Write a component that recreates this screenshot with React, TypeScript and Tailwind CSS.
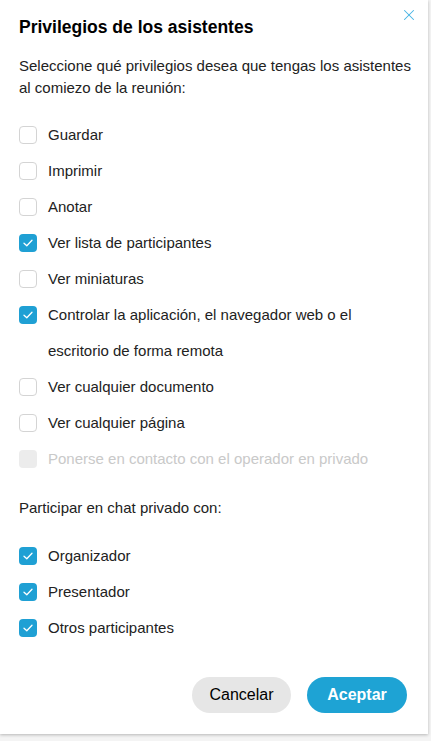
import { X } from "lucide-react";

type Item = { label: string; checked?: boolean; disabled?: boolean };

const privileges: Item[] = [
  { label: "Guardar" },
  { label: "Imprimir" },
  { label: "Anotar" },
  { label: "Ver lista de participantes", checked: true },
  { label: "Ver miniaturas" },
  { label: "Controlar la aplicación, el navegador web o el escritorio de forma remota", checked: true },
  { label: "Ver cualquier documento" },
  { label: "Ver cualquier página" },
  { label: "Ponerse en contacto con el operador en privado", disabled: true },
];

const chat: Item[] = [
  { label: "Organizador", checked: true },
  { label: "Presentador", checked: true },
  { label: "Otros participantes", checked: true },
];

function Checkbox({ checked, disabled }: { checked?: boolean; disabled?: boolean }) {
  if (checked) {
    return (
      <span className="mt-[9px] flex h-[18px] w-[18px] shrink-0 items-center justify-center rounded-[4px] bg-[#1fa0d4]">
        <svg width="10" height="8" viewBox="0 0 10 8" fill="none">
          <path d="M1 4.2 L3.8 6.8 L9 1.2" stroke="white" strokeWidth="1.3" strokeLinecap="round" strokeLinejoin="round" />
        </svg>
      </span>
    );
  }
  if (disabled) {
    return <span className="mt-[9px] h-[18px] w-[18px] shrink-0 rounded-[4px] bg-[#ececec]" />;
  }
  return <span className="mt-[9px] h-[18px] w-[18px] shrink-0 rounded-[4px] border border-[#d4d4d4] bg-white" />;
}

function Row({ item }: { item: Item }) {
  return (
    <label className="flex items-start gap-[11px]">
      <Checkbox checked={item.checked} disabled={item.disabled} />
      <span className={`pr-10 text-[15px] leading-[36px] ${item.disabled ? "text-[#c9c9c9]" : "text-[#222]"}`}>
        {item.label}
      </span>
    </label>
  );
}

export default function App() {
  return (
    <div className="h-[741px] w-[431px] bg-[#f4f4f4]" style={{ fontFamily: '"Liberation Sans", Arial, sans-serif' }}>
      <div className="relative flex h-[734px] w-[428px] flex-col bg-white px-[19px] pt-[16px] shadow-[0_1px_3px_rgba(0,0,0,0.25)]">
        <button className="absolute right-[10px] top-[6px] text-[#45b3e4]">
          <X className="h-[18px] w-[18px]" strokeWidth={1.4} />
        </button>

        <h1 className="text-[17.5px] font-bold leading-[22px] text-black">Privilegios de los asistentes</h1>

        <p className="mt-[17px] whitespace-nowrap text-[15px] leading-[22px] text-[#222]">
          Seleccione qué privilegios desea que tengas los asistentes
          <br />
          al comiezo de la reunión:
        </p>

        <div className="mt-[18px] flex flex-col">
          {privileges.map((p) => (
            <Row key={p.label} item={p} />
          ))}
        </div>

        <p className="mt-[20px] text-[15px] leading-[22px] text-[#222]">Participar en chat privado con:</p>

        <div className="mt-[19px] flex flex-col">
          {chat.map((p) => (
            <Row key={p.label} item={p} />
          ))}
        </div>

        <div className="mt-auto mb-[21px] flex justify-end gap-[16px] pr-[2px]">
          <button className="h-[36px] w-[99px] rounded-full bg-[#e6e6e6] text-[16px] text-black">Cancelar</button>
          <button className="h-[36px] w-[100px] rounded-full bg-[#1ea3d4] text-[16px] font-semibold text-white">Aceptar</button>
        </div>
      </div>
    </div>
  );
}
